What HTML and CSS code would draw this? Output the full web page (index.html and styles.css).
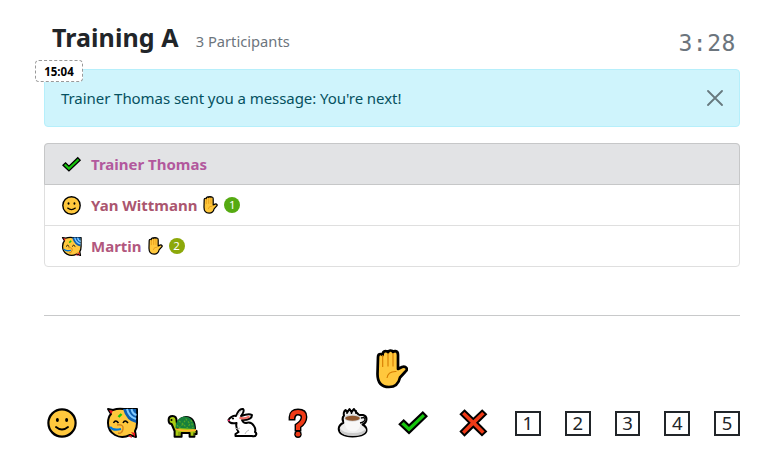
FILE: index.html
```html
<!DOCTYPE html>
<html lang="en">
<head>
<meta charset="utf-8">
<title>Training A</title>
<link rel="stylesheet" href="styles.css">
</head>
<body>
<svg class="defs" aria-hidden="true">
  <symbol id="smile" viewBox="0 0 36 36">
    <circle cx="18" cy="18" r="13.6" fill="#ffc83d" stroke="#000" stroke-width="2.2"/>
    <ellipse cx="13.4" cy="15" rx="1.5" ry="2"/><ellipse cx="22.6" cy="15" rx="1.5" ry="2"/>
    <path d="M12 22q6 5 12 0" fill="none" stroke="#000" stroke-width="1.9" stroke-linecap="round"/>
  </symbol>
  <symbol id="party" viewBox="0 0 36 36">
    <path d="M4 4l5 1q5-2 11-1h13v14q0 5-2 8l1 6-6-2q-8 4-15 0-7-4-7-12 0-6 3-9z" fill="#ffc83d" stroke="#000" stroke-width="2" stroke-linejoin="round"/>
    <path d="M19 4h13.200v14q-10-2-13.200-14z" fill="#0f5fb0"/>
    <path d="M23 4q2 8 9 10M27.500 4q1 5 5 6" fill="none" stroke="#83cbff" stroke-width="2"/>
    <path d="M5 5l4 1-2 3zM27 27l4 1v4zM24 31l3-1 1 3z" fill="#e81224"/>
    <path d="M14.500 12l3-3" stroke="#16c60c" stroke-width="2.400"/>
    <path d="M9.500 18q2-4 5 0M19 18q2-4 5 0" fill="none" stroke="#000" stroke-width="1.500"/>
    <path d="M6 22q3 4 11 2" fill="none" stroke="#0078d7" stroke-width="2.200"/>
    <path d="M13 20q7-1 6 4t-5 4" fill="none" stroke="#d6861c" stroke-width="1.500"/>
  </symbol>
  <symbol id="turtle" viewBox="0 0 36 36">
    <path d="M13 24Q13 13 22 12q9 0 9 13l1.600 1v3h-2.200v2.700h-4.800V28h-8v3.700h-7V26l-3-7q-3 0-3-4 0-4 4-4t4 5l1 7z" fill="#aacb12" stroke="#000" stroke-width="2" stroke-linejoin="round"/>
    <path d="M11.500 23q0-10 8.500-11.500 10 0 11 12.500z" fill="#16803b"/>
    <path d="M15 16l4 3 3-5 4 5-3 4-4-4-4 4-2-3M27 15l2 8" fill="none" stroke="#54a626" stroke-width="1.200" stroke-dasharray="2 1.500"/>
    <path d="M12 24q9 3 20 1" fill="none" stroke="#ffb52e" stroke-width="1.800"/>
    <circle cx="7.500" cy="15" r="1"/>
    <path d="M15 27v4M30 27v4" stroke="#657c10" stroke-width="1"/>
  </symbol>
  <symbol id="rabbit" viewBox="0 0 36 36">
    <path d="M12 11q3-8 7-7 2 2-2 7 8-3 11-1 0 5-10 5 1 3 4 3 5-2 8 3 2 3 1 6 2 1 1 3-1 2-4 1H11.500v-2l3-2q-3-4-2-9-8 1-8-3 1-2 3-3 2-2 4.500-1z" fill="#fff" stroke="#000" stroke-width="2" stroke-linejoin="round"/>
    <path d="M16.500 13q4 1 8-1" fill="none" stroke="#f07068" stroke-width="2.400" stroke-linecap="round"/>
    <path d="M14 10l3-4" stroke="#ccc" stroke-width="1"/>
    <path d="M11 23q3 2 5 0M21 29q1-3 4-4" fill="none" stroke="#bbb" stroke-width="1"/>
    <circle cx="9" cy="13.500" r="1.100"/><circle cx="4.900" cy="15.500" r="1" fill="#e26"/>
  </symbol>
  <symbol id="question" viewBox="0 0 27 36">
    <path d="M8 12q0-5 6-5t6 5-6 9v2" fill="none" stroke="#000" stroke-width="6.800" stroke-linecap="square"/>
    <circle cx="14" cy="29.200" r="3.700"/>
    <path d="M8 12q0-5 6-5t6 5-6 9v2" fill="none" stroke="#f03a17" stroke-width="4" stroke-linecap="square"/>
    <circle cx="14" cy="29.200" r="2.400" fill="#f03a17"/>
  </symbol>
  <symbol id="coffee" viewBox="0 0 36 36">
    <path d="M9 11q-1-4 1.500-6l2 2 2-3 2 3 2.500-3 2 3 3 3h4q3.500 1 3.500 4 0 4-4 5.500 4 2 4 5.500 0 6-14 6.500Q4 31 3.700 24q0-4 5-6.500-2-3-.5-6z" fill="#eee" stroke="#000" stroke-width="2" stroke-linejoin="round"/>
    <path d="M5 23q2 5 13 5t13-5v3q-2 5-13 5T5 26z" fill="#ccc"/>
    <path d="M9 13h17q0 11-5 13-5 1-8-1-4-4-4-12z" fill="#f8f8f8"/>
    <path d="M26 13q4-1 4 1 0 3-5 4" fill="none" stroke="#000" stroke-width="1.300"/>
    <ellipse cx="17.500" cy="13" rx="8.500" ry="3.400" fill="#d2d2d2"/><ellipse cx="17.500" cy="13.300" rx="7.300" ry="2.500" fill="#8e562e"/>
    <path d="M12 5v4M16.500 5v4M21 5v4" stroke="#000" stroke-width="1.400"/>
  </symbol>
  <symbol id="check" viewBox="0 0 36 36">
    <path d="M4.700 19.300L8.700 15.400 14 20.600 27.800 7.400 31.500 11.200 14 28z" fill="#16c60c" stroke="#000" stroke-width="2.100"/>
  </symbol>
  <symbol id="cross" viewBox="0 0 36 36">
    <path d="M9.500 5.500L18.300 14 27.200 5.500 31 9.200 22.300 17.700 31 26.500 27 30.300 18.300 21.700 9.500 30.300 5.700 26.500 14.400 17.700 5.700 9.200z" fill="#f03a17" stroke="#000" stroke-width="1.900"/>
  </symbol>
  <symbol id="hand" viewBox="0 0 32 40">
    <path d="M2 8q0-3 2.600-3 1.400 0 2 1Q6.500 2.200 9.500 2q1.700 0 2.500 1.300Q12.500 1.500 14.500 1.500q2 0 2.500 1.500 1-1 2.500-.8Q22 2.500 22 6v14l4-2q3-1 4.500 1 1 2-1 3.500l-5.500 6Q22 38 13 38 1.500 38 1.500 25z" fill="#ffc83d" stroke="#000" stroke-width="2.700" stroke-linejoin="round"/>
    <path d="M6.700 6v12M12 4v13.500M17 4v13.500M11 29q1-7 9.500-6.500" fill="none" stroke="#d67d00" stroke-width="1.100"/>
  </symbol>
</svg>

<main class="page">
  <header class="header">
    <h1 class="title">Training A</h1>
    <span class="count">3 Participants</span>
    <span class="timer">3:28</span>
  </header>

  <section class="alert">
    <span class="stamp">15:04</span>
    <span class="message">Trainer Thomas sent you a message: You're next!</span>
    <svg class="close" viewBox="0 0 16 16"><path d="M1 1l14 14M15 1L1 15"/></svg>
  </section>

  <ul class="people">
    <li class="person trainer"><svg class="mood"><use href="#check"/></svg><span class="name trainer-name">Trainer Thomas</span></li>
    <li class="person"><svg class="mood"><use href="#smile"/></svg><span class="name yan">Yan Wittmann</span><svg class="raised"><use href="#hand"/></svg><span class="badge first">1</span></li>
    <li class="person"><svg class="mood"><use href="#party"/></svg><span class="name martin">Martin</span><svg class="raised"><use href="#hand"/></svg><span class="badge second">2</span></li>
  </ul>

  <hr class="rule">

  <div class="raise"><svg class="big-hand"><use href="#hand"/></svg></div>

  <nav class="reactions">
    <svg class="icon"><use href="#smile"/></svg>
    <svg class="icon"><use href="#party"/></svg>
    <svg class="icon"><use href="#turtle"/></svg>
    <svg class="icon"><use href="#rabbit"/></svg>
    <svg class="icon narrow"><use href="#question"/></svg>
    <svg class="icon"><use href="#coffee"/></svg>
    <svg class="icon"><use href="#check"/></svg>
    <svg class="icon"><use href="#cross"/></svg>
    <span class="digit">1</span>
    <span class="digit">2</span>
    <span class="digit">3</span>
    <span class="digit">4</span>
    <span class="digit">5</span>
  </nav>
</main>
</body>
</html>
```
FILE: styles.css
```css
* { box-sizing: border-box; }
body { margin: 0; background: #fff; color: #212529; font: 15px/24px "Noto Sans", "Open Sans", sans-serif; overflow: hidden; }
.defs { position: absolute; width: 0; height: 0; }
.page { width: 696px; margin-left: 44px; }
.header { display: flex; align-items: baseline; height: 69px; padding: 20px 4px 0 8px; }
.title { margin: 0; font-size: 25px; line-height: 34px; font-weight: 700; letter-spacing: 0.08px; white-space: nowrap; }
.count { margin-left: 17px; color: #6c757d; font-size: 14.700px; white-space: nowrap; }
.timer { align-self: flex-start; margin: 6px 0 0 auto; color: #6c757d; font: 23px/34px "DejaVu Sans Mono", monospace; letter-spacing: 0.550px; }
.alert { position: relative; display: flex; align-items: center; justify-content: space-between; height: 58px; padding: 0 16px; background: #cff4fc; border: 1px solid #b6effb; border-radius: 4px; color: #055160; }
.stamp { position: absolute; left: -10px; top: -10px; width: 48px; height: 22px; border: 1px dashed #999; border-radius: 4px; background: #fff; color: #000; font-size: 11.500px; font-weight: 700; line-height: 21px; text-align: center; }
.message { letter-spacing: -0.060px; white-space: nowrap; }
.close { width: 16px; height: 16px; fill: none; stroke: #67797e; stroke-width: 1.800; stroke-linecap: round; }
.people { list-style: none; margin: 16px 0 0; padding: 0; border: 1px solid #dfdfdf; border-radius: 4px; }
.person { display: flex; align-items: center; height: 41px; padding-left: 15px; border-top: 1px solid #dfdfdf; }
.trainer { height: 42px; margin: -1px -1px 0; background: #e2e3e5; border: 1px solid #c6c7c8; border-radius: 4px 4px 0 0; }
.trainer + .person { border-top: 0; height: 40px; }
.mood { width: 23px; height: 23px; }
.name { margin-left: 8px; font-weight: 700; white-space: nowrap; }
.trainer-name { color: #b2589d; }
.yan { color: #ab566f; }
.martin { color: #b2587e; }
.raised { width: 15px; height: 18px; margin-left: 6px; }
.badge { width: 16px; height: 16px; margin-left: 6px; border-radius: 50%; color: #fff; font-size: 11.500px; line-height: 16px; text-align: center; }
.first { background: #55aa11; }
.second { background: #8ca80a; }
.rule { margin: 48px 0 0; border: 0; border-top: 1px solid #c8c9ca; }
.raise { display: flex; justify-content: center; padding-top: 33px; height: 89px; }
.big-hand { width: 32px; height: 40px; }
.reactions { display: flex; align-items: center; justify-content: space-between; height: 36px; }
.icon { width: 36px; height: 36px; }
.narrow { width: 27px; }
.digit { width: 25.800px; height: 25px; margin-top: 1px; border: 2px solid #212529; font-size: 18.500px; line-height: 20px; text-align: center; }
```
